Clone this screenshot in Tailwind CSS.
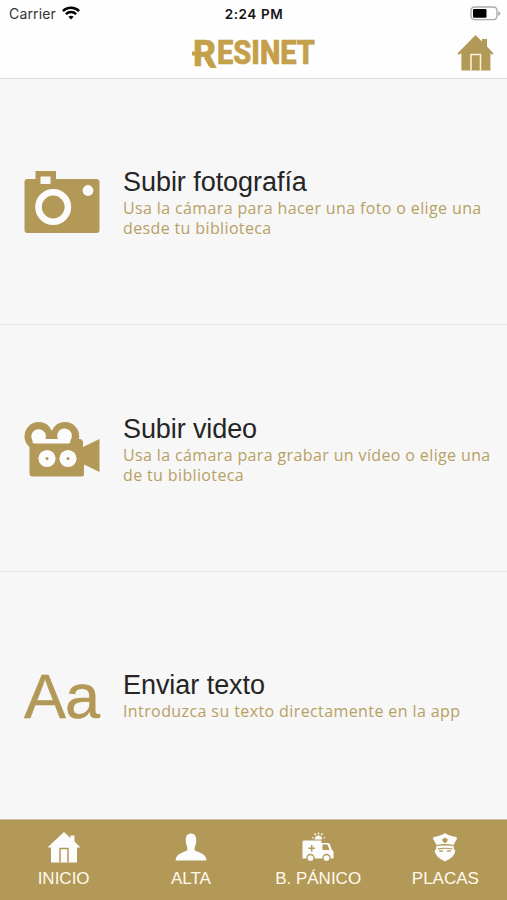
<!DOCTYPE html>
<html lang="es">
<head>
<meta charset="utf-8">
<meta name="viewport" content="width=device-width, initial-scale=1">
<title>Resinet</title>
<script src="https://cdn.jsdelivr.net/npm/@tailwindcss/browser@4"></script>
</head>
<body class="bg-[#f7f7f7] font-['Liberation_Sans',sans-serif]">
<div class="flex h-[900px] w-[507px] flex-col overflow-hidden">
  <header class="flex h-[79px] shrink-0 flex-col border-b border-[#dedede] bg-[#fefefe]">
    <div class="grid h-7 grid-cols-3 items-center pl-[9px] pr-[6px] font-['Inter',sans-serif]">
      <div class="flex items-center gap-[6px] text-[14px] text-[#333]"><span class="-translate-y-px tracking-[0.15px]">Carrier</span>
        <svg class="h-[14px] w-[18px] -translate-y-px" viewBox="0 0 18 14" fill="none" stroke="#000" stroke-width="2.5"><path d="M.9 5.2C5.2.7 12.8.7 17.1 5.2M3.9 8.2C6.8 5.4 11.2 5.4 14.1 8.2"/><path d="M6.4 10.8Q9 8.600 11.6 10.8L9 13.4Z" fill="#000" stroke="none"/></svg>
      </div>
      <div class="-translate-x-px text-center text-[13.5px] font-semibold tracking-[0.6px] text-[#151515]">2:24 PM</div>
      <svg class="h-[15px] w-[31px] -translate-y-px justify-self-end" viewBox="0 0 31 15"><rect x="1" y="1" width="26" height="12.6" rx="3.5" fill="#fff" stroke="#aaa" stroke-width="1.4"/><rect x="3" y="3" width="13.5" height="8.7" rx="1" fill="#000"/><path d="M28.3 5v5q2-1 2-2.5T28.3 5Z" fill="#aaa"/></svg>
    </div>
    <div class="grid grow grid-cols-[1fr_128px_1fr] items-center px-[13px]">
      <span></span>
      <svg class="h-[50px] w-[128px] overflow-visible" viewBox="0 0 128 50" fill="#c5a04b" stroke="#c5a04b" stroke-width=".7" font-family="Roboto, sans-serif" font-weight="800">
        <text x="3" y="37.500" font-size="37" textLength="23" lengthAdjust="spacingAndGlyphs">R</text>
        <text x="27" y="36" font-size="33" textLength="98" lengthAdjust="spacingAndGlyphs">ESINET</text>
        <path d="M2 23.500h3v4h-3ZM18 29l9 11h-6.500L14 30Z" stroke="none"/>
      </svg>
      <svg class="h-[36px] w-[37px] justify-self-end" viewBox="0 0 37 36"><path fill="#b39957" d="M18.5 0 25 6.5V4h5v7.5l6.5 7-1.5 1.3-1.6-1.5V35.500h-29V18.3L2 19.800 .5 18.500Z"/><path d="M14 35.500V19.500h9.500v16" fill="none" stroke="#fff5d8" stroke-width="1.500"/></svg>
    </div>
  </header>
  <main class="flex min-h-0 grow flex-col text-[#b7a064]">
    <section class="flex h-[246px] items-center gap-6 border-b border-[#e5e5e5] pl-6 pt-[3px]">
      <svg class="h-[63px] w-[76px] shrink-0 -translate-y-px" viewBox="-.5 0 76 63"><path fill="#b39957" fill-rule="evenodd" d="M3 8H11V0H31.500V8H72Q75 8 75 11V59Q75 62 72 62H3Q0 62 0 59V11Q0 8 3 8ZM16 5.500V13H26V5.500Z"/><circle cx="28.700" cy="36" r="14.700" fill="none" stroke="#fcfcfc" stroke-width="6.600"/><circle cx="63.500" cy="19.500" r="5.400" fill="#fcfcfc"/></svg>
      <div class="-ml-px"><h2 class="text-[27px] leading-[28px] tracking-[-0.05px] text-[#252525]">Subir fotografía</h2><p class="mt-0.5 font-['Open_Sans',sans-serif] text-[16px] leading-5 tracking-[0.37px] whitespace-nowrap">Usa la cámara para hacer una foto o elige una<br>desde tu biblioteca</p></div>
    </section>
    <section class="flex h-[247px] items-center gap-6 border-b border-[#e5e5e5] pl-6 pt-[3px]">
      <svg class="h-[55px] w-[76px] shrink-0" viewBox="-.5 0 76 55"><g fill="#b39957"><circle cx="14.200" cy="14.200" r="14.200"/><circle cx="40.500" cy="14.200" r="14.200"/><path d="M5 20H52V17H55Q58.500 17 58.500 21V25L75 17V50L59.500 42.500V52Q59.500 54.500 57 54.500H8Q5 54.500 5 51.500Z"/></g><path fill="#fcfcfc" d="M10 21.500Q7.500 21.500 8 18.500A7.300 7.300 0 1 1 21 17H33.500A7.300 7.300 0 1 1 46 18Q46 21.500 44 21.500Z"/><g fill="#fcfcfc"><circle cx="22.500" cy="36.500" r="8.600"/><circle cx="43.500" cy="36.500" r="8.600"/></g><g fill="#b39957"><circle cx="22.500" cy="36.500" r="1.500"/><circle cx="43.500" cy="36.500" r="1.500"/></g></svg>
      <div class="-ml-px"><h2 class="text-[27px] leading-[28px] tracking-[-0.1px] text-[#252525]">Subir video</h2><p class="mt-0.5 font-['Open_Sans',sans-serif] text-[16px] leading-5 tracking-[0.37px] whitespace-nowrap">Usa la cámara para grabar un vídeo o elige una<br>de tu biblioteca</p></div>
    </section>
    <section class="flex h-[247px] items-center gap-6 pl-6">
      <div class="w-[75px] shrink-0 text-[63px] leading-[70px] tracking-[-1px] text-[#b39957] [-webkit-text-stroke:0.5px_#b39957]">Aa</div>
      <div class="pt-px"><h2 class="text-[27px] leading-[28px] tracking-[-0.05px] text-[#252525]">Enviar texto</h2><p class="mt-0.5 font-['Open_Sans',sans-serif] text-[16px] leading-5 tracking-[0.4px] whitespace-nowrap">Introduzca su texto directamente en la app</p></div>
    </section>
  </main>
  <nav class="grid h-[81px] w-[509px] shrink-0 grid-cols-4 border-t border-[#cfc29d] bg-[#b39957] pt-3 text-[17px] leading-[22px] text-[#fffaf0]">
    <div class="flex flex-col items-center gap-[5px]"><svg class="h-[31px] w-8" viewBox="0 0 32 31"><path fill="#fcfcfc" d="M16 0 22.500 6V3.500h4V9.500l5.500 5.500-1.500 1-1.500-1V30.500h-26V15L1.500 16 0 15Z"/><path d="M12 30.500V16.500h8v14" fill="none" stroke="#b39957" stroke-width="1.500"/></svg><span>INICIO</span></div>
    <div class="flex flex-col items-center gap-[5px]"><svg class="h-[31px] w-8" viewBox="0 0 32 31"><path fill="#fcfcfc" d="M16 1.500C20 1.500 21.700 5 21.200 9.500C21 13 19.500 14.500 19.500 18C23 21 31 20.500 31.500 28.500H.5C1 20.500 9 21 12.500 18C12.500 14.500 11 13 10.800 9.500C10.300 5 12 1.500 16 1.500Z"/></svg><span>ALTA</span></div>
    <div class="flex flex-col items-center gap-[5px]"><svg class="h-[31px] w-8" viewBox="0 0 32 31"><path fill="#fcfcfc" d="M2 8.500H19.500V11H26Q27.500 11 28 12.500L30 18Q31.500 18.500 31.500 20.500V26.500H.5V10Q.5 8.500 2 8.500Z"/><path fill="#b39957" d="M20.500 12.500H25.500L27.500 18H20.500ZM9 13h1.500v2.500H13V17h-2.500v2.500H9V17H6.500v-1.500H9Z"/><g fill="#fcfcfc" stroke="#b39957" stroke-width="1.300"><circle cx="8.500" cy="26" r="3.500"/><circle cx="24.500" cy="26" r="3.500"/></g><path fill="#fcfcfc" d="M12.500 7.500Q13 3.500 16.500 3.500T20 7.500Z"/><path stroke="#fcfcfc" stroke-width="1.300" d="M16.500.5v2M12.500 1.500l1.300 1.500M20.500 1.500l-1.300 1.500M10 5.500l1.500.5M23 5.500l-1.500.5"/></svg><span class="whitespace-nowrap">B. PÁNICO</span></div>
    <div class="flex flex-col items-center gap-[5px]"><svg class="h-[31px] w-8" viewBox="0 0 32 31"><path fill="#fcfcfc" d="M16 1Q19 3.500 27 5Q29 5.500 27 8.500L24.500 13H7.500L5 8.500Q3 5.500 5 5Q13 3.500 16 1ZM7.500 13.500H24.500L25 17.500Q27 17.500 26 20Q25.500 25 16 29.500Q6.500 25 6 20Q5 17.500 7 17.500Z"/><path fill="#b39957" d="M13.500 6.500Q15 7 16 5.500Q17 7 18.500 6.500V8.500Q18.500 10 16 11Q13.500 10 13.500 8.500Z"/><path fill="none" stroke="#b39957" stroke-width="1.200" d="M7.500 13.500Q16 11.500 24.500 13.500M8.500 17Q16 15.500 23.500 17M11 18v1.200h3M21 18v1.200h-3"/></svg><span>PLACAS</span></div>
  </nav>
</div>
</body>
</html>
